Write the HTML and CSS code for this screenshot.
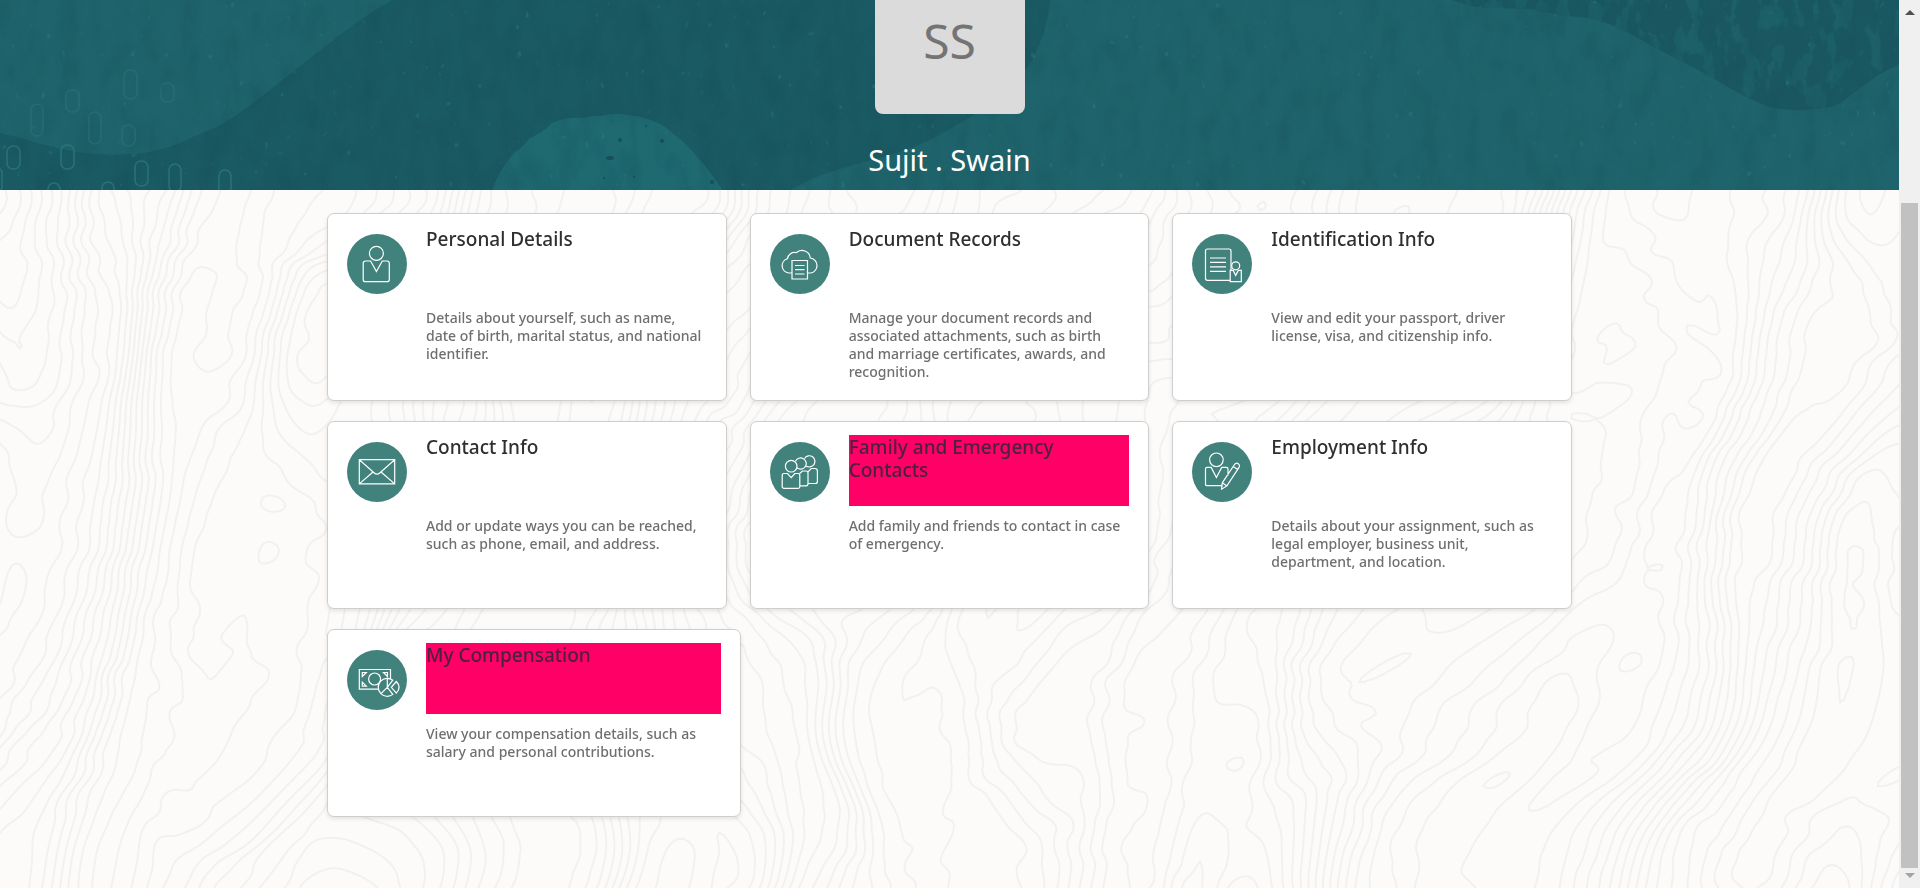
FILE: index.html
```html
<!DOCTYPE html>
<html lang="en">
<head>
<meta charset="utf-8">
<title>Personal Information</title>
<link rel="stylesheet" href="styles.css">
</head>
<body>
<div class="page">
  <div class="content">
    <header class="banner">
      <svg class="banner-art" viewBox="0 0 1899 190" preserveAspectRatio="xMidYMax slice" aria-hidden="true">
        <defs>
          <filter id="grain" x="0" y="0" width="100%" height="100%" color-interpolation-filters="sRGB">
            <feTurbulence type="fractalNoise" baseFrequency="0.05 0.025" numOctaves="4" seed="4"/>
            <feColorMatrix values="0 0 0 0 0.07  0 0 0 0 0.28  0 0 0 0 0.32  1.6 0 0 0 -0.62"/>
          </filter>
          <filter id="specks" x="0" y="0" width="100%" height="100%" color-interpolation-filters="sRGB">
            <feTurbulence type="fractalNoise" baseFrequency="0.13 0.1" numOctaves="2" seed="11"/>
            <feColorMatrix values="0 0 0 0 0.2  0 0 0 0 0.52  0 0 0 0 0.54  0 9 0 0 -6.7"/>
          </filter>
          <filter id="patches" x="0" y="0" width="100%" height="100%" color-interpolation-filters="sRGB">
            <feTurbulence type="fractalNoise" baseFrequency="0.07 0.035" numOctaves="6" seed="7"/>
            <feColorMatrix values="0 0 0 0 0.12  0 0 0 0 0.39  0 0 0 0 0.42  0 0 8 0 -4.1"/>
          </filter>
          <clipPath id="corner"><path d="M1452 0Q1475 8 1490 8T1530 9Q1560 16 1590 18Q1620 26 1650 45L1700 71L1725 85Q1745 98 1770 107Q1795 112 1815 109Q1832 108 1842 102Q1860 88 1878 75L1899 64V0Z"/></clipPath>
        </defs>
        <rect width="1899" height="190" fill="#1a5a62"/>
        <path fill="#1f646c" d="M0 133Q14 136 30 141Q62 150 84 153Q118 157 150 152Q175 147 195 136L215 128Q232 119 245 109Q272 89 300 66L340 35Q366 15 392 0H0Z"/>
        <path fill="#1f6971" d="M492 190Q500 168 515 152Q523 147 530 138Q545 131 552 123Q565 117 581 118Q595 115 602 116Q615 112 627 115Q650 117 665 127Q690 146 697 157Q710 170 722 190Z"/>
        <path fill="#1f646c" d="M790 190Q812 178 830 172Q863 162 900 152Q920 145 934 138L970 117Q1014 90 1032 60Q1048 30 1050 0H1899V190Z"/>
        <g clip-path="url(#corner)"><rect x="1440" width="459" height="190" fill="#1a5861"/><rect x="1440" width="459" height="190" filter="url(#patches)" opacity=".8"/></g>
        <g fill="#165059"><ellipse cx="610" cy="158" rx="4" ry="2"/><circle cx="646" cy="126" r="1"/><circle cx="620" cy="140" r="2"/><circle cx="662" cy="141" r="2"/><circle cx="712" cy="182" r="2"/><circle cx="634" cy="177" r="1"/><circle cx="604" cy="178" r="1"/></g>
        <rect width="1899" height="190" filter="url(#grain)" opacity=".3"/>
        <rect width="1899" height="190" filter="url(#specks)" opacity=".35"/>
        <g fill="none" stroke="#2e7c82" stroke-width="1.6" opacity="0.7">
          <rect x="124" y="70" width="13" height="29" rx="6" opacity=".6"/><rect x="161" y="83" width="13" height="19" rx="6" opacity=".6"/><rect x="66" y="90" width="13" height="22" rx="6" opacity=".6"/><rect x="31" y="104" width="12" height="32" rx="6" opacity=".6"/><rect x="89" y="112" width="12" height="32" rx="6" opacity=".6"/><rect x="122" y="125" width="13" height="21" rx="6" opacity=".6"/>
          <rect x="7" y="146" width="13" height="23" rx="6"/><rect x="61" y="145" width="13" height="24" rx="6"/><rect x="135" y="161" width="13" height="25" rx="6"/><rect x="169" y="164" width="12" height="28" rx="6"/><rect x="219" y="170" width="12" height="28" rx="6"/><rect x="48" y="183" width="12" height="24" rx="6"/><rect x="102" y="182" width="12" height="24" rx="6"/><rect x="-9" y="168" width="11" height="24" rx="5"/>
        </g>
      </svg>
      <div class="avatar">SS</div>
      <h1 class="name">Sujit . Swain</h1>
    </header>
    <main class="main">
      <canvas class="contours" aria-hidden="true"></canvas>
      <div class="cards">
        <a class="card" href="#personal">
          <svg class="icon" viewBox="0 0 60 60" aria-hidden="true"><circle class="disc" cx="30" cy="30" r="30"/><circle cx="29.400" cy="19.300" r="7"/><path d="M23.600 27H18.500a2.300 2.300 0 0 0-2.300 2.300V45.400a2.300 2.300 0 0 0 2.300 2.300H40a2.300 2.300 0 0 0 2.300-2.300V29.300A2.300 2.300 0 0 0 40 27H35.300L29.400 37.500Z"/></svg>
          <div class="text"><h2 class="title">Personal Details</h2><p class="desc">Details about yourself, such as name, date of birth, marital status, and national identifier.</p></div>
        </a>
        <a class="card" href="#documents">
          <svg class="icon" viewBox="0 0 60 60" aria-hidden="true"><circle class="disc" cx="30" cy="30" r="30"/><path d="M22 39H18.800a7.300 7.300 0 0 1-1.300-14.300a7 7 0 0 1 8.700-6a8.400 8.400 0 0 1 14.100 5.300a7.600 7.600 0 0 1 .6 15H37.500M22 26.500H37.500V45H22ZM25 31.500H34.500M25 35.700H34.500M25 40H34.500"/></svg>
          <div class="text"><h2 class="title">Document Records</h2><p class="desc">Manage your document records and associated attachments, such as birth and marriage certificates, awards, and recognition.</p></div>
        </a>
        <a class="card" href="#identification">
          <svg class="icon" viewBox="0 0 60 60" aria-hidden="true"><circle class="disc" cx="30" cy="30" r="30"/><path d="M38 46.300H15.500a2 2 0 0 1-2-2V17a2 2 0 0 1 2-2H37a2 2 0 0 1 2 2V36M18 24H34M18 28.400H34M18 32.800H34M18 37.300H34M41.200 36.400H38.200V47.700H49.300V36.400H46.300L43.700 41.400Z"/><circle cx="43.700" cy="31.800" r="4"/></svg>
          <div class="text"><h2 class="title">Identification Info</h2><p class="desc">View and edit your passport, driver license, visa, and citizenship info.</p></div>
        </a>
        <a class="card" href="#contact">
          <svg class="icon" viewBox="0 0 60 60" aria-hidden="true"><circle class="disc" cx="30" cy="30" r="30"/><path d="M12.300 17.700H47.700V41.900H12.300ZM12.300 17.700L27 30.800Q30 33.500 33 30.800L47.700 17.700M12.300 41.900L26 30M47.700 41.900L34 30"/></svg>
          <div class="text"><h2 class="title">Contact Info</h2><p class="desc">Add or update ways you can be reached, such as phone, email, and address.</p></div>
        </a>
        <a class="card" href="#family">
          <svg class="icon" viewBox="0 0 60 60" aria-hidden="true"><circle class="disc" cx="30" cy="30" r="30"/><circle cx="21.200" cy="24.200" r="5.800"/><path d="M25.500 19.300A5.600 5.600 0 1 1 27 25.800M34.500 16.500A5.600 5.600 0 1 1 35.500 23.500M17.500 31.500H14a1.800 1.800 0 0 0-1.800 1.800V44.600a1.800 1.800 0 0 0 1.800 1.800H28a1.800 1.800 0 0 0 1.800-1.800V33.300A1.800 1.800 0 0 0 28 31.500H24.800L21.200 35.600ZM29.800 31.500L32.300 29H36a2 2 0 0 1 2 2V41.800a2 2 0 0 1-2 2H29.800M38 29.800L41.200 26.500H45a2.400 2.400 0 0 1 2.400 2.400V39.500a2 2 0 0 1-2 2H38"/></svg>
          <div class="text"><h2 class="title marked">Family and Emergency Contacts</h2><p class="desc">Add family and friends to contact in case of emergency.</p></div>
        </a>
        <a class="card" href="#employment">
          <svg class="icon" viewBox="0 0 60 60" aria-hidden="true"><circle class="disc" cx="30" cy="30" r="30"/><circle cx="24.400" cy="17.800" r="6.800"/><path d="M30.500 43.700H15a1.500 1.500 0 0 1-1.500-1.500V26.900a1.500 1.500 0 0 1 1.500-1.500H19.200L24.400 35.500L29.700 25.400H34.500a1.500 1.500 0 0 1 1.500 1.500V33.500M29.600 47.200L30.300 40.800L42.500 22.500Q44.300 20.300 46.500 21.900Q48.300 23.500 46.900 25.600L34.900 43.900ZM30.300 40.800L34.900 43.900M41.300 24.500L45.700 27.500"/></svg>
          <div class="text"><h2 class="title">Employment Info</h2><p class="desc">Details about your assignment, such as legal employer, business unit, department, and location.</p></div>
        </a>
        <a class="card wide" href="#compensation">
          <svg class="icon" viewBox="0 0 60 60" aria-hidden="true"><circle class="disc" cx="30" cy="30" r="30"/><path d="M12.300 19.500H43.500V39.200H12.300ZM15.300 22.500H19.300L15.300 26.500ZM40.500 22.500H36.500L40.500 26.500ZM15.300 36.200H19.300L15.300 32.200Z"/><circle cx="27.600" cy="29" r="6"/><circle class="disc" cx="40.300" cy="37.300" r="9"/><path d="M45.800 30.200A9 9 0 1 0 45.800 44.400L40.300 37.300ZM40.300 28.300V37.300L34 43.700M49.300 31.500Q55 37.300 49.300 43.100L44.300 37.300Z"/></svg>
          <div class="text"><h2 class="title marked">My Compensation</h2><p class="desc">View your compensation details, such as salary and personal contributions.</p></div>
        </a>
      </div>
    </main>
  </div>
  <div class="scrollbar" aria-hidden="true">
    <span class="arrow up"></span>
    <span class="thumb"></span>
    <span class="arrow down"></span>
  </div>
</div>
<script src="contours.js"></script>
</body>
</html>
```
FILE: styles.css
```css
* { box-sizing: border-box; }
body {
  margin: 0;
  font-family: "Noto Sans", "Open Sans", sans-serif;
  color: #2f2f2f;
}
.page { display: flex; min-height: 100vh; }
.content { flex: 1; min-width: 0; display: flex; flex-direction: column; }

.banner {
  position: relative;
  display: flex;
  flex-direction: column;
  align-items: center;
  height: 190px;
  background: #1a5a62;
  overflow: hidden;
}
.banner-art { position: absolute; inset: 0; width: 100%; height: 100%; }
.avatar {
  position: relative;
  width: 150px;
  height: 114px;
  padding-top: 6px;
  border-radius: 0 0 8px 8px;
  background: #dbdbdb;
  color: #747474;
  font-size: 48px;
  line-height: 70px;
  text-align: center;
}
.name {
  position: relative;
  margin: 26px 0 0;
  color: #fff;
  font-size: 29px;
  font-weight: 400;
  line-height: 40px;
}

.main {
  position: relative;
  flex: 1;
  padding: 23px 20px 60px;
  background: #fcfbfa;
}
.contours { position: absolute; inset: 0; width: 100%; height: 100%; }
.cards {
  position: relative;
  display: grid;
  grid-template-columns: repeat(3, minmax(0, 1fr));
  gap: 20px 23px;
  max-width: 1245px;
  margin: 0 auto;
}
.card {
  display: flex;
  gap: 19px;
  min-height: 188px;
  padding: 13px 19px;
  border: 1px solid #cfcecd;
  border-radius: 7px;
  background: #fff;
  box-shadow: 0 2px 4px rgba(0, 0, 0, 0.1);
  color: inherit;
  text-decoration: none;
}
.wide { margin-right: -14px; }
.icon {
  flex: none;
  width: 60px;
  height: 60px;
  margin-top: 7px;
  fill: none;
  stroke: #fff;
  stroke-width: 1.2;
}
.disc { fill: #42827d; stroke: none; }
.text { flex: 1; min-width: 0; }
.title {
  min-height: 71px;
  margin: 0 0 11px;
  padding-top: 1px;
  font-size: 19px;
  font-weight: 500;
  line-height: 23px;
}
.marked { background: #ff0066; color: #4c2040; }
.desc {
  margin: 0;
  color: #6f6f6f;
  font-size: 14px;
  font-weight: 500;
  line-height: 18px;
}

.scrollbar {
  display: flex;
  flex-direction: column;
  align-items: center;
  gap: 5px;
  width: 21px;
  padding: 10px 0;
  background: #f0f0f0;
}
.arrow { border: 5px solid transparent; border-top-width: 0; border-bottom-width: 0; }
.up { border-bottom: 5px solid #505050; }
.down { border-top: 5px solid #a3a3a3; }
.thumb { flex: 1; width: 17px; margin-top: 183px; background: #c1c1c1; }
```
FILE: contours.js
```javascript
// Draws a faint topographic pattern: level lines of a warped height field.
(function () {
  var canvas = document.querySelector('.contours');
  var w = canvas.clientWidth, h = canvas.clientHeight;
  canvas.width = w;
  canvas.height = h;
  var ctx = canvas.getContext('2d');

  function hash(x, y) {
    var n = Math.sin(x * 127.1 + y * 311.7) * 43758.5453;
    return n - Math.floor(n);
  }
  function noise(x, y) {
    var ix = Math.floor(x), iy = Math.floor(y), fx = x - ix, fy = y - iy;
    var u = fx * fx * fx * (fx * (fx * 6 - 15) + 10), v = fy * fy * fy * (fy * (fy * 6 - 15) + 10);
    var a = hash(ix, iy), b = hash(ix + 1, iy), c = hash(ix, iy + 1), d = hash(ix + 1, iy + 1);
    return a + (b - a) * u + (c - a) * v + (a - b - c + d) * u * v;
  }
  function height(x, y) {
    var wx = x + 120 * noise(x / 260, y / 170 + 9) + 0.2 * y;
    var wy = y + 60 * noise(x / 110 + 5, y / 150);
    return 11 * noise(wx / 150, wy / 420) + 6 * noise(wx / 80 + 31, wy / 190) +
      0.8 * noise(wx / 40, wy / 22 + 17) + wx / 22;
  }

  var step = 4, cols = Math.ceil(w / step), rows = Math.ceil(h / step), g = [];
  for (var j = 0; j <= rows; j++) {
    g.push([]);
    for (var i = 0; i <= cols; i++) g[j].push(height(i * step, j * step));
  }
  ctx.strokeStyle = '#f2f1f0';
  ctx.lineWidth = 2;
  ctx.lineCap = 'round';
  ctx.beginPath();
  for (j = 0; j < rows; j++) {
    for (i = 0; i < cols; i++) {
      var c = [[i, j, g[j][i]], [i + 1, j, g[j][i + 1]], [i + 1, j + 1, g[j + 1][i + 1]], [i, j + 1, g[j + 1][i]]];
      var lo = Math.min(c[0][2], c[1][2], c[2][2], c[3][2]);
      var hi = Math.max(c[0][2], c[1][2], c[2][2], c[3][2]);
      for (var level = Math.ceil(lo); level <= hi; level++) {
        var p = [];
        for (var k = 0; k < 4; k++) {
          var a = c[k], b = c[(k + 1) % 4];
          if ((a[2] < level) !== (b[2] < level)) {
            var t = (level - a[2]) / (b[2] - a[2]);
            p.push([(a[0] + (b[0] - a[0]) * t) * step, (a[1] + (b[1] - a[1]) * t) * step]);
          }
        }
        for (k = 0; k + 1 < p.length; k += 2) {
          ctx.moveTo(p[k][0], p[k][1]);
          ctx.lineTo(p[k + 1][0], p[k + 1][1]);
        }
      }
    }
  }
  ctx.stroke();
})();
```
